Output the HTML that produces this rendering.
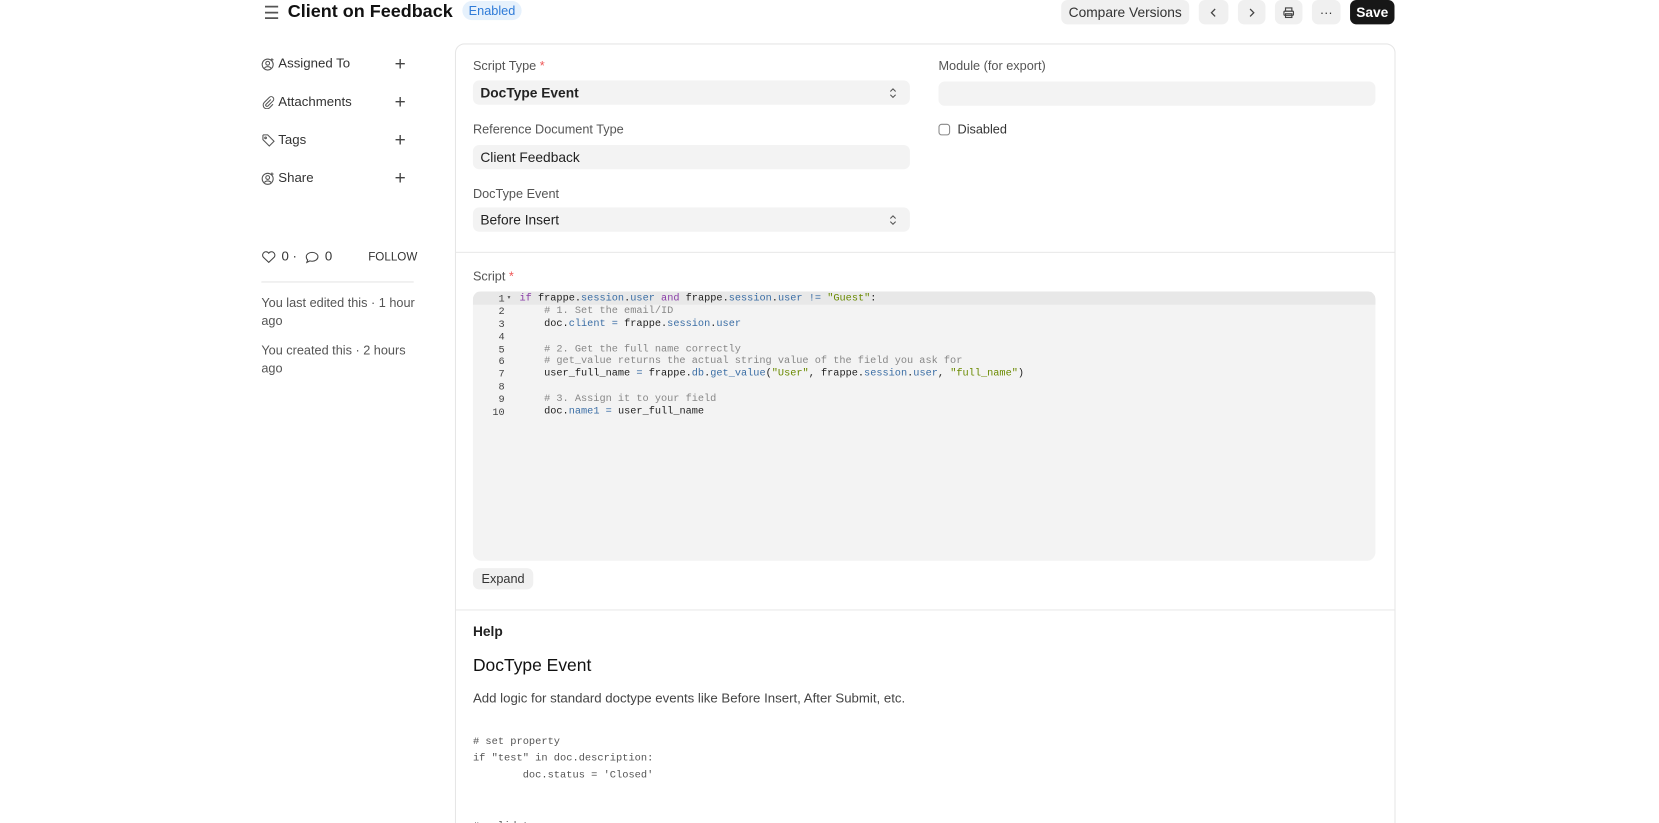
<!DOCTYPE html>
<html><head><meta charset="utf-8"><style>
*{box-sizing:border-box;margin:0;padding:0}
html,body{width:1659px;height:823px;overflow:hidden;background:#fff}
#w{position:absolute;left:0;top:0;width:1568px;height:778px;overflow:hidden;transform:scale(1.05804);transform-origin:0 0;font-family:"Liberation Sans",sans-serif;color:#1f272e}
.a{position:absolute}
.btn{position:absolute;top:0;height:23px;background:#f0f0f0;border-radius:6px;font-size:13px;color:#333;display:flex;align-items:center;justify-content:center}
.side{position:absolute;left:263px;font-size:12.5px;color:#333}
.ic{position:absolute;left:247px}
.plus{position:absolute;left:373px;font-size:18px;color:#444;font-weight:300}
.lbl{position:absolute;font-size:12px;color:#555}
.inp{position:absolute;height:23px;background:#f3f3f3;border-radius:6px;font-size:13px;color:#222;padding:0 7px;line-height:23px}
.mono{font-family:"Liberation Mono",monospace}
.code{position:absolute;left:447px;top:275px;width:853px;height:255px;background:#f3f3f3;border-radius:8px;overflow:hidden}
.ln{position:absolute;left:0;width:30px;text-align:right;font-size:9.7px;color:#444}
.cl{position:absolute;left:44px;font-size:9.7px;white-space:pre;color:#222}
.k{color:#8a3ea8}.p{color:#3b6ea5}.s{color:#6a8a00}.c{color:#888}.o{color:#3b6ea5}
</style></head><body><div id="w">
<div class="a" style="left:249px;top:3px;font-size:17px;color:#555">☰</div>
<div class="a" style="left:272px;top:1px;font-size:17px;font-weight:bold;color:#111">Client on Feedback</div>
<div class="a" style="left:437px;top:1px;width:56px;height:18px;background:#e6f1fc;border-radius:9px;color:#2f7bd8;font-size:12px;text-align:center;line-height:18px">Enabled</div>
<div class="btn" style="left:1003px;width:121px">Compare Versions</div>
<div class="btn" style="left:1133px;width:28px"><svg width="10" height="10" viewBox="0 0 10 10"><path d="M6.5 1.5L3 5l3.5 3.5" fill="none" stroke="#444" stroke-width="1.2"/></svg></div>
<div class="btn" style="left:1170px;width:26px"><svg width="10" height="10" viewBox="0 0 10 10"><path d="M3.5 1.5L7 5 3.5 8.5" fill="none" stroke="#444" stroke-width="1.2"/></svg></div>
<div class="btn" style="left:1205px;width:26px"><svg width="12" height="12" viewBox="0 0 12 12" fill="none" stroke="#444" stroke-width="1.1"><rect x="3" y="1.5" width="6" height="3"/><rect x="1.5" y="4.5" width="9" height="4" rx="1"/><rect x="3" y="7" width="6" height="3.5"/></svg></div>
<div class="btn" style="left:1240px;width:27px;font-size:12px">···</div>
<div class="btn" style="left:1276px;width:42px;background:#171717;color:#fff;font-weight:bold">Save</div>

<svg class="ic" style="top:54px" width="13" height="13" viewBox="0 0 13 13" fill="none" stroke="#555" stroke-width="1"><circle cx="6" cy="7" r="5.2"/><circle cx="6" cy="5.8" r="1.8"/><path d="M3 10.5c1-2 5-2 6 0M10 1v3M8.5 2.5h3"/></svg>
<div class="side" style="top:53px">Assigned To</div><div class="plus" style="top:50px">+</div>
<svg class="ic" style="top:90px" width="13" height="13" viewBox="0 0 13 13" fill="none" stroke="#555" stroke-width="1"><path d="M9 4L4.5 8.5a1.2 1.2 0 0 0 1.7 1.7L11 5.4a2.4 2.4 0 0 0-3.4-3.4L2.8 6.8a3.5 3.5 0 0 0 5 5L11 8.5"/></svg>
<div class="side" style="top:89px">Attachments</div><div class="plus" style="top:86px">+</div>
<svg class="ic" style="top:126px" width="13" height="13" viewBox="0 0 13 13" fill="none" stroke="#555" stroke-width="1"><path d="M1.5 2v4l6 6 4.5-4.5-6-6h-4z"/><circle cx="4" cy="4.3" r=".8"/></svg>
<div class="side" style="top:125px">Tags</div><div class="plus" style="top:122px">+</div>
<svg class="ic" style="top:162px" width="13" height="13" viewBox="0 0 13 13" fill="none" stroke="#555" stroke-width="1"><circle cx="6" cy="7" r="5.2"/><circle cx="6" cy="5.8" r="1.8"/><path d="M3 10.5c1-2 5-2 6 0M10 1v3M8.5 2.5h3"/></svg>
<div class="side" style="top:161px">Share</div><div class="plus" style="top:158px">+</div>
<svg class="ic" style="top:237px" width="14" height="12" viewBox="0 0 14 12" fill="none" stroke="#444" stroke-width="1"><path d="M7 11L1.8 6A3 3 0 0 1 7 2.3 3 3 0 0 1 12.2 6z"/></svg>
<div class="side" style="left:266px;top:235px;font-size:12.5px">0 ·</div>
<svg class="ic" style="left:288px;top:237px" width="14" height="12" viewBox="0 0 14 12" fill="none" stroke="#444" stroke-width="1"><path d="M7 1.5c3 0 5.5 1.8 5.5 4.2S10 9.9 7 9.9c-.8 0-1.5-.1-2.2-.3L2 11l.8-2.3C1.9 8 1.5 6.9 1.5 5.7 1.5 3.3 4 1.5 7 1.5z"/></svg>
<div class="side" style="left:307px;top:235px">0</div>
<div class="side" style="left:348px;top:237px;font-size:11px">FOLLOW</div>
<div class="a" style="left:247px;top:266px;width:144px;height:1px;background:#e5e5e5"></div>
<div class="side" style="left:247px;top:278px;width:150px;line-height:17px;color:#555;font-size:12px">You last edited this · 1 hour ago</div>
<div class="side" style="left:247px;top:323px;width:150px;line-height:17px;color:#555;font-size:12px">You created this · 2 hours ago</div>

<div class="a" style="left:430px;top:41px;width:889px;height:900px;border:1px solid #e6e6e6;border-radius:9px"></div>
<div class="lbl" style="left:447px;top:55px">Script Type <span style="color:#e55">*</span></div>
<div class="inp" style="left:447px;top:76px;width:413px;font-weight:bold">DocType Event</div>
<div class="lbl" style="left:447px;top:115px">Reference Document Type</div>
<div class="inp" style="left:447px;top:137px;width:413px">Client Feedback</div>
<div class="lbl" style="left:447px;top:176px">DocType Event</div>
<div class="inp" style="left:447px;top:196px;width:413px">Before Insert</div>
<svg class="a" style="left:840px;top:82px" width="8" height="12" viewBox="0 0 8 12" fill="none" stroke="#555" stroke-width="1"><path d="M1.5 4.5L4 2l2.5 2.5M1.5 7.5L4 10l2.5-2.5"/></svg>
<svg class="a" style="left:840px;top:202px" width="8" height="12" viewBox="0 0 8 12" fill="none" stroke="#555" stroke-width="1"><path d="M1.5 4.5L4 2l2.5 2.5M1.5 7.5L4 10l2.5-2.5"/></svg>
<div class="lbl" style="left:887px;top:55px">Module (for export)</div>
<div class="inp" style="left:887px;top:77px;width:413px"></div>
<div class="a" style="left:887px;top:117px;width:11px;height:11px;border:1px solid #888;border-radius:3px"></div>
<div class="a" style="left:905px;top:115px;font-size:12px;color:#333">Disabled</div>
<div class="a" style="left:431px;top:238px;width:887px;height:1px;background:#e8e8e8"></div>
<div class="lbl" style="left:447px;top:254px">Script <span style="color:#e55">*</span></div>
<div class="code mono">
<div class="a" style="left:0;top:1px;width:853px;height:12px;background:#e8e8e8"></div>
<div class="ln" style="top:2px">1</div><div class="a" style="left:32px;top:2px;font-size:7px;color:#555">▾</div>
<div class="cl" style="top:1px"><span class="k">if</span> frappe.<span class="p">session</span>.<span class="p">user</span> <span class="k">and</span> frappe.<span class="p">session</span>.<span class="p">user</span> <span class="o">!=</span> <span class="s">"Guest"</span>:</div>
<div class="ln" style="top:14px">2</div><div class="cl" style="top:13px"><span class="c">    # 1. Set the email/ID</span></div>
<div class="ln" style="top:26px">3</div><div class="cl" style="top:25px">    doc.<span class="p">client</span> <span class="o">=</span> frappe.<span class="p">session</span>.<span class="p">user</span></div>
<div class="ln" style="top:38px">4</div>
<div class="ln" style="top:50px">5</div><div class="cl" style="top:49px"><span class="c">    # 2. Get the full name correctly</span></div>
<div class="ln" style="top:61px">6</div><div class="cl" style="top:60px"><span class="c">    # get_value returns the actual string value of the field you ask for</span></div>
<div class="ln" style="top:73px">7</div><div class="cl" style="top:72px">    user_full_name <span class="o">=</span> frappe.<span class="p">db</span>.<span class="p">get_value</span>(<span class="s">"User"</span>, frappe.<span class="p">session</span>.<span class="p">user</span>, <span class="s">"full_name"</span>)</div>
<div class="ln" style="top:85px">8</div>
<div class="ln" style="top:97px">9</div><div class="cl" style="top:96px"><span class="c">    # 3. Assign it to your field</span></div>
<div class="ln" style="top:109px">10</div><div class="cl" style="top:108px">    doc.<span class="p">name1</span> <span class="o">=</span> user_full_name</div>
</div>
<div class="a" style="left:447px;top:537px;width:57px;height:20px;background:#f0f0f0;border-radius:6px;font-size:12px;color:#333;text-align:center;line-height:20px">Expand</div>
<div class="a" style="left:431px;top:576px;width:887px;height:1px;background:#e8e8e8"></div>
<div class="a" style="left:447px;top:589px;font-size:13px;font-weight:bold;color:#222">Help</div>
<div class="a" style="left:447px;top:620px;font-size:16.5px;color:#111">DocType Event</div>
<div class="a" style="left:447px;top:653px;font-size:12.5px;color:#444">Add logic for standard doctype events like Before Insert, After Submit, etc.</div>
<div class="a mono" style="left:447px;top:693px;font-size:9.8px;color:#555;white-space:pre;line-height:16px"># set property
if "test" in doc.description:
        doc.status = 'Closed'


# validate</div>
</div></body></html>
